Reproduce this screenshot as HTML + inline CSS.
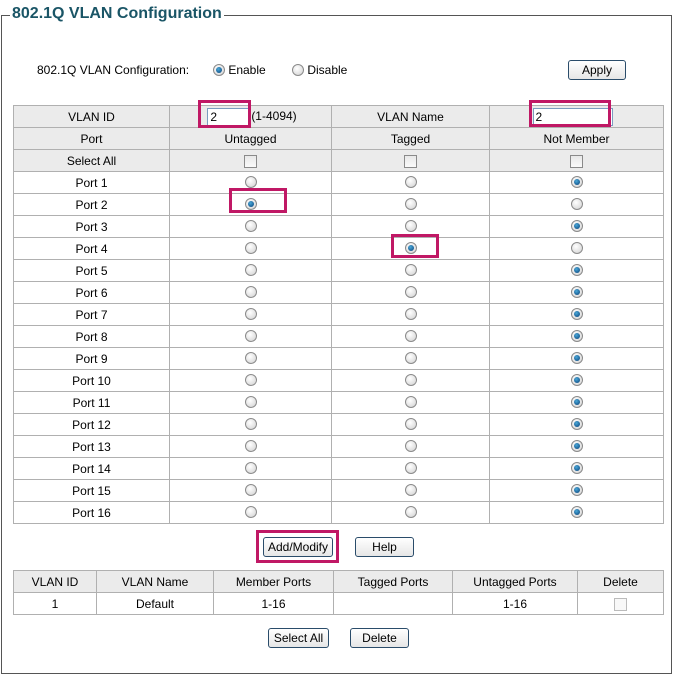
<!DOCTYPE html>
<html><head><meta charset="utf-8"><style>
body{margin:0;width:677px;height:677px;background:#fff;font-family:"Liberation Sans",Arial,sans-serif;font-size:12px;color:#000;position:relative;overflow:hidden}
.fs{position:absolute;left:1px;top:15px;width:669px;height:657px;border:1px solid #555;}
.lg{position:absolute;left:10px;top:5px;background:#fff;padding:0 2px;font-weight:bold;font-size:16px;color:#1a5566}
.a{position:absolute}
table{position:absolute;border-collapse:collapse;table-layout:fixed}
td{border:1px solid #b0b0b0;height:21px;padding:0;text-align:center;font-size:12px}
.g td{background:#ebebeb}
.r{display:inline-block;width:10px;height:10px;border:1px solid #8a8a8a;border-radius:50%;background:radial-gradient(circle at 40% 35%,#fff,#d0d0d0);vertical-align:middle;position:relative;top:-1px}
.r.c::after{content:"";position:absolute;left:2px;top:2px;width:6px;height:6px;border-radius:50%;background:radial-gradient(circle at 40% 35%,#4aa8d8,#063f78)}
.cb{display:inline-block;width:11px;height:11px;border:1px solid #8a8a8a;background:linear-gradient(#e8e8e8,#fafafa);vertical-align:middle}
.btn{position:absolute;border:1px solid #2a4c6a;border-radius:3px;background:linear-gradient(#fff,#e6e6e6);text-align:center;font-size:12px;line-height:18px;height:18px}
.pk{position:absolute;border:3px solid #c01865;box-sizing:border-box}
.inp{display:inline-block;border:1px solid #7a9cc0;background:#fff;height:18px;text-align:left;font-size:12px;line-height:16px;padding-left:2px;box-sizing:border-box;vertical-align:middle}
</style></head><body>
<div class="fs"></div>
<div class="lg a">802.1Q VLAN Configuration</div>
<div class="a" style="left:37px;top:63px">802.1Q VLAN Configuration:</div>
<div class="a" style="left:213px;top:63px"><span class="r c"></span> Enable</div>
<div class="a" style="left:292px;top:63px"><span class="r"></span> Disable</div>
<div class="btn" style="left:568px;top:60px;width:56px">Apply</div>

<table style="left:13px;top:105px;width:650px">
<colgroup><col style="width:156px"><col style="width:162px"><col style="width:158px"><col style="width:174px"></colgroup>
<tr class="g"><td>VLAN ID</td><td><span class="inp" style="width:44px;margin-left:3px">2</span>(1-4094)</td><td>VLAN Name</td><td><span class="inp" style="width:80px;margin-left:-8px">2</span></td></tr>
<tr class="g"><td>Port</td><td>Untagged</td><td>Tagged</td><td>Not Member</td></tr>
<tr class="g"><td>Select All</td><td><span class="cb"></span></td><td><span class="cb"></span></td><td><span class="cb"></span></td></tr>
<tr><td>Port 1</td><td><span class="r"></span></td><td><span class="r"></span></td><td><span class="r c"></span></td></tr>
<tr><td>Port 2</td><td><span class="r c"></span></td><td><span class="r"></span></td><td><span class="r"></span></td></tr>
<tr><td>Port 3</td><td><span class="r"></span></td><td><span class="r"></span></td><td><span class="r c"></span></td></tr>
<tr><td>Port 4</td><td><span class="r"></span></td><td><span class="r c"></span></td><td><span class="r"></span></td></tr>
<tr><td>Port 5</td><td><span class="r"></span></td><td><span class="r"></span></td><td><span class="r c"></span></td></tr>
<tr><td>Port 6</td><td><span class="r"></span></td><td><span class="r"></span></td><td><span class="r c"></span></td></tr>
<tr><td>Port 7</td><td><span class="r"></span></td><td><span class="r"></span></td><td><span class="r c"></span></td></tr>
<tr><td>Port 8</td><td><span class="r"></span></td><td><span class="r"></span></td><td><span class="r c"></span></td></tr>
<tr><td>Port 9</td><td><span class="r"></span></td><td><span class="r"></span></td><td><span class="r c"></span></td></tr>
<tr><td>Port 10</td><td><span class="r"></span></td><td><span class="r"></span></td><td><span class="r c"></span></td></tr>
<tr><td>Port 11</td><td><span class="r"></span></td><td><span class="r"></span></td><td><span class="r c"></span></td></tr>
<tr><td>Port 12</td><td><span class="r"></span></td><td><span class="r"></span></td><td><span class="r c"></span></td></tr>
<tr><td>Port 13</td><td><span class="r"></span></td><td><span class="r"></span></td><td><span class="r c"></span></td></tr>
<tr><td>Port 14</td><td><span class="r"></span></td><td><span class="r"></span></td><td><span class="r c"></span></td></tr>
<tr><td>Port 15</td><td><span class="r"></span></td><td><span class="r"></span></td><td><span class="r c"></span></td></tr>
<tr><td>Port 16</td><td><span class="r"></span></td><td><span class="r"></span></td><td><span class="r c"></span></td></tr>
</table>

<div class="btn" style="left:263px;top:537px;width:68px">Add/Modify</div>
<div class="btn" style="left:355px;top:537px;width:57px">Help</div>

<table style="left:13px;top:570px;width:650px">
<colgroup><col style="width:83px"><col style="width:117px"><col style="width:120px"><col style="width:119px"><col style="width:125px"><col style="width:86px"></colgroup>
<tr class="g"><td>VLAN ID</td><td>VLAN Name</td><td>Member Ports</td><td>Tagged Ports</td><td>Untagged Ports</td><td>Delete</td></tr>
<tr><td>1</td><td>Default</td><td>1-16</td><td></td><td>1-16</td><td><span class="cb" style="border-color:#bbb;background:#f8f8f8"></span></td></tr>
</table>

<div class="btn" style="left:268px;top:628px;width:59px">Select All</div>
<div class="btn" style="left:350px;top:628px;width:57px">Delete</div>

<div class="pk" style="left:198px;top:100px;width:53px;height:28px"></div>
<div class="pk" style="left:529px;top:100px;width:82px;height:27px"></div>
<div class="pk" style="left:229px;top:188px;width:58px;height:25px"></div>
<div class="pk" style="left:391px;top:234px;width:48px;height:24px"></div>
<div class="pk" style="left:256px;top:530px;width:83px;height:33px"></div>
</body></html>
